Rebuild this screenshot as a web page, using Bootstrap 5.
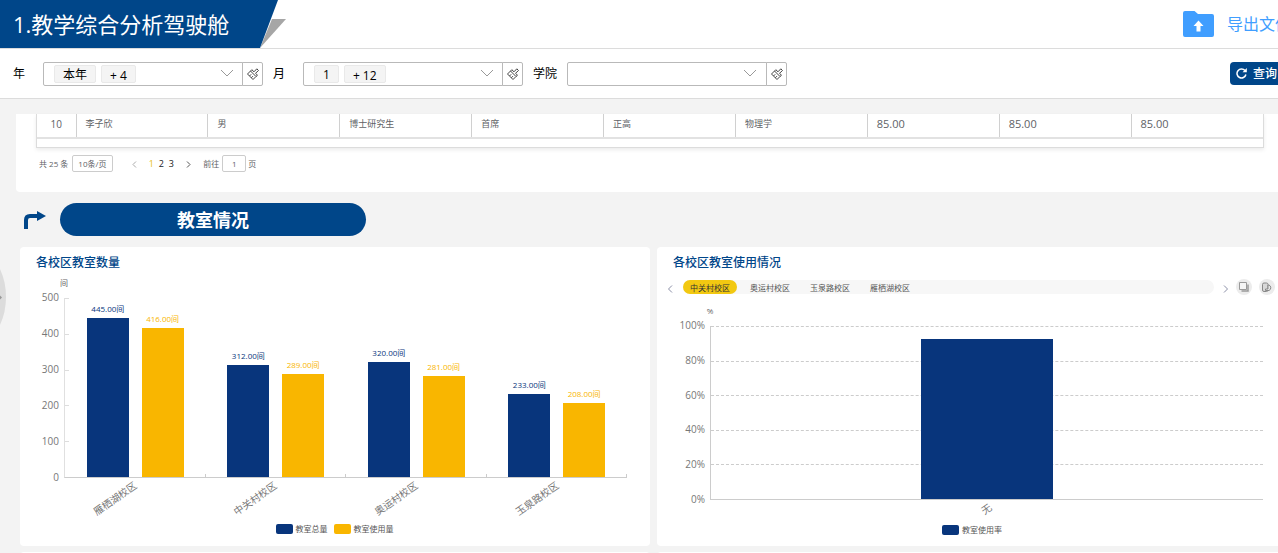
<!DOCTYPE html>
<html lang="zh-CN">
<head>
<meta charset="utf-8">
<meta name="viewport" content="width=device-width, initial-scale=1">
<title>教学综合分析驾驶舱</title>
<link href="https://cdn.jsdelivr.net/npm/bootstrap@5.3.0/dist/css/bootstrap.min.css" rel="stylesheet">
<style>
  :root { --brand: #004689; --bar: #08357c; --accent: #f9b600; --rule: #dcdcdc; }
  body { font-family: "Open Sans", "Noto Sans CJK SC", sans-serif; font-size: 12px; line-height: 16px; color: #000; background: #f3f3f3; overflow: hidden; }
  /* the dashboard is slightly wider than the window and is clipped at its right edge */
  .app { width: calc(100% + 16px); height: 100vh; }
  .topbar { border-bottom: 1px solid var(--rule); }
  .topbar h1 { width: 260px; height: 48px; padding-left: 13px; font-size: 22px; line-height: 48px; background: var(--brand); }
  .export-link { font-size: 16px; line-height: 24px; color: #409eff; gap: 13px; padding-right: 3px; }
  .filters { height: 50px; gap: 10px; padding: 0 9px 0 13px; border-bottom: 1px solid var(--rule); }
  .filter-label { min-width: 20px; }
  .picker { width: 200px; height: 24px; font-size: 12px; border: 1px solid #b9b9b9; border-radius: 2px 0 0 2px; background: #fff; padding: 0 9px 0 10px; gap: 5px; }
  .picker.form-select { background: #fff url("data:image/svg+xml,%3Csvg xmlns='http://www.w3.org/2000/svg' viewBox='0 0 12 7'%3E%3Cpath d='M0 0 6 6 12 0' fill='none' stroke='%23999'/%3E%3C/svg%3E") no-repeat right 10px center / 12px 7px; }
  .chip { height: 18px; padding: 0 8px; line-height: 17px; border: 1px solid #e9e9e9; border-radius: 2px; background: #f4f4f4; }
  .chip-more { line-height: 19px; }
  .clear-btn { width: 21px; height: 24px; margin-left: -1px; border: 1px solid #b9b9b9; border-radius: 0 2px 2px 0; background: #fff; }
  .query-btn { height: 23px; padding: 0 8px 0 6px; font-size: 12px; font-weight: 500; line-height: 23px; color: #fff; background: var(--brand); border-radius: 4px; gap: 6px; }
  .panel { margin: 15px 0 0 16px; padding: 0 30px 20px 20px; background: #fff; border-radius: 0 0 4px 4px; }
  .grid-frame { height: 34px; border: solid var(--rule); border-width: 0 1px 1px; box-shadow: 0 2px 4px rgba(0,0,0,.08); }
  .grid-frame table { table-layout: fixed; font-size: 9px; color: #606266; }
  .grid-frame td { height: 24px; padding: 0 8px 4px 9px; vertical-align: middle; border-right: 1px solid #d0d0d0; border-bottom: 2px solid #e2e2e2; }
  .grid-frame td:last-child { border-right: 0; }
  .grid-frame td:first-child { width: 39px; padding: 0 0 4px; text-align: center; font-size: 10px; }
  .grid-frame td.score { font-size: 11px; }
  .pager { margin: 7px 0 0 3px; font-size: 8px; color: #606266; }
  .pager select, .pager input { height: 17px; border: 1px solid #ccc; border-radius: 2px; background: #fff; color: #606266; font-size: 8px; text-align: center; padding: 0; appearance: none; }
  .pager select { width: 41px; padding-left: 5px; text-align: left; }
  .pager input { width: 24px; margin: 0 2px 0 3px; }
  .pager a { width: 10px; font-size: 9px; color: #222; text-align: center; }
  .pager a.current { color: #e8c020; }
  .pager .prev { margin: 0 7px 0 16px; }
  .pager .next { margin: 0 10px 0 7px; }
  .section-head { margin: 11px 0 0 24px; gap: 14px; }
  .section-head h2 { width: 306px; height: 33px; font-size: 18px; line-height: 34px; border-radius: 17px; background: var(--brand); }
  .cards { margin: 11px 7px 0 20px; gap: 6px 7px; grid-template-columns: 1fr 1fr; }
  .chart-card { border: 0; border-radius: 4px; padding: 8px 0 10px 16px; min-height: 299px; }
  .chart-card h3 { font-size: 12px; line-height: 16px; font-weight: 500; color: var(--brand); }
  .unit { width: 60px; font-size: 8px; line-height: 12px; color: #666; text-align: center; }
  .chart-rooms { padding-right: 23px; }
  .chart-rooms .unit { margin: 6px 0 9px -2px; }
  .chart-usage { padding-right: 24px; }
  .chart-usage .unit { margin: 10px 0 9px 7px; }
  .y-axis { margin: -7px 5px -5px 0; font-size: 10px; line-height: 12px; color: #777; text-align: right; }
  .chart-rooms .y-axis { width: 23px; }
  .chart-usage .y-axis { width: 32px; }
  .plot { border: solid #ccc; border-width: 0 0 1px 1px; }
  .chart-rooms .plot { height: 180px; border-left-color: #e0e0e0; }
  .chart-usage .plot { height: 174px; }
  .scale { inset: 0; }
  .scale i { flex: 1 1 0; border-top: 1px solid #ddd; }
  .chart-rooms .scale i { width: 4px; }
  .chart-usage .scale i { border-top: 1px dashed #ccc; }
  .bar-group { flex: 1 1 0; gap: 9%; }
  .bar-group::after { content: ""; position: absolute; right: 0; bottom: 0; height: 3px; border-right: 1px solid #ccc; }
  .bar-col { width: 30%; font-size: 8px; line-height: 12px; }
  .bar-col b { font-weight: 400; white-space: nowrap; margin-bottom: 3px; color: var(--tone); }
  .bar-col div { width: 100%; background: var(--tone); }
  .chart-usage .bar-col { width: 24%; }
  .chart-usage .bar-group::after { display: none; }
  .tone-total { --tone: var(--bar); }
  .tone-used { --tone: var(--accent); }
  .x-axis { font-size: 10px; line-height: 12px; color: #777; padding-top: 1px; }
  .chart-rooms .x-axis { height: 45px; margin-left: 28px; }
  .chart-usage .x-axis { height: 24px; margin-left: 37px; }
  .x-axis div { flex: 1 1 0; display: flex; justify-content: flex-end; padding-right: 50%; }
  .chart-rooms .x-axis div { padding-right: 13%; }
  .x-axis span { white-space: nowrap; transform: rotate(-35deg); transform-origin: 100% 0; }
  .legend-row { gap: 6px; font-size: 8px; line-height: 12px; color: #555; }
  .legend-row span { display: flex; align-items: center; gap: 3px; }
  .legend-row i { width: 17px; height: 10px; border-radius: 2px; background: var(--tone); }
  .chart-rooms .legend-row { margin: 0 -22px 0 -16px; }
  .chart-usage .legend-row { margin: 0 -24px 0 -16px; }
  .tabs-row { margin: 8px -12px 0 -6px; height: 16px; }
  .tab-strip { height: 14px; gap: 6px; border-radius: 7px; background: #f7f7f7; margin: 0 9px 0 10px; }
  .tab-strip button { padding: 0 7px; border: 0; border-radius: 7px; background: none; font-size: 8px; line-height: 15px; color: #555; }
  .tab-strip button.active { background: #f2c811; color: #333; }
  .arrow-btn, .tool-btn { border: 0; padding: 0; background: none; line-height: 0; }
  .arrow-btn { margin-top: 4px; }
  .tool-btn { width: 16px; height: 16px; margin-left: 7px; border-radius: 50%; background: #ececec; }
  .drawer-handle { left: 0; top: 265px; border: 0; padding: 0; background: none; line-height: 0; }
</style>
</head>
<body>
<svg class="d-none" aria-hidden="true">
  <symbol id="brush" viewBox="0 0 14 14"><g fill="none" stroke="#444" stroke-linejoin="round"><path d="M4.500 4 1.500 7 7 12.500 10 9.500ZM4.500 4 5.800 2.700 8 4.800 10.800 1.800 12.500 3.500 9.500 6.300 11.500 8.200 10 9.500"/><path d="M3.500 9 5.200 7.300M5.300 10.800 7 9.100"/></g></symbol>
  <symbol id="chevron" viewBox="0 0 12 7"><path d="M0 0 6 6 12 0" fill="none" stroke="#999"/></symbol>
</svg>

<div class="app d-flex flex-column">
  <header class="topbar d-flex align-items-center bg-white">
    <h1 class="m-0 fw-normal text-white text-nowrap">1.教学综合分析驾驶舱</h1>
    <svg width="26" height="48" aria-hidden="true"><path d="M12 19H26L0 48Z" fill="#a6a6a6"/><path d="M0 0H18L0 48Z" fill="#004689"/></svg>
    <a href="#" class="export-link ms-auto d-flex align-items-center text-decoration-none text-nowrap">
      <svg width="31" height="26" viewBox="0 0 31 26" aria-hidden="true"><path d="M2 0H11.500L15 3H29a2 2 0 0 1 2 2V24a2 2 0 0 1-2 2H2a2 2 0 0 1-2-2V2A2 2 0 0 1 2 0Z" fill="#409eff"/><path d="M15.500 9.500 20.500 15H17.500V20.500H13.500V15H10.500Z" fill="#fff"/></svg>
      导出文件
    </a>
  </header>

  <form class="filters d-flex align-items-center bg-white flex-shrink-0">
    <label class="filter-label" for="year">年</label>
    <div class="d-flex">
      <button type="button" id="year" class="picker d-flex align-items-center" aria-haspopup="listbox">
        <span class="chip">本年</span><span class="chip chip-more">+ 4</span>
        <svg class="ms-auto" width="12" height="7"><use href="#chevron"/></svg>
      </button>
      <button type="button" class="clear-btn d-flex align-items-center justify-content-center p-0" aria-label="清除年"><svg width="14" height="14"><use href="#brush"/></svg></button>
    </div>
    <label class="filter-label" for="month">月</label>
    <div class="d-flex">
      <button type="button" id="month" class="picker d-flex align-items-center" aria-haspopup="listbox">
        <span class="chip">1</span><span class="chip chip-more">+ 12</span>
        <svg class="ms-auto" width="12" height="7"><use href="#chevron"/></svg>
      </button>
      <button type="button" class="clear-btn d-flex align-items-center justify-content-center p-0" aria-label="清除月"><svg width="14" height="14"><use href="#brush"/></svg></button>
    </div>
    <label class="filter-label" for="college">学院</label>
    <div class="d-flex">
      <select id="college" class="picker form-select"><option></option></select>
      <button type="button" class="clear-btn d-flex align-items-center justify-content-center p-0" aria-label="清除学院"><svg width="14" height="14"><use href="#brush"/></svg></button>
    </div>
    <button type="button" class="query-btn btn ms-auto d-flex align-items-center border-0 text-nowrap">
      <svg width="11" height="11" viewBox="0 0 11 11" aria-hidden="true"><path d="M9 2.600A4.500 4.500 0 1 0 9.900 6.500" fill="none" stroke="#fff" stroke-width="1.500"/><path d="M10.800 0V4.300H6.500Z" fill="#fff"/></svg>查询
    </button>
  </form>

  <main class="flex-grow-1 overflow-hidden">
    <section class="panel">
      <div class="grid-frame">
        <table class="w-100">
          <tbody><tr><td>10</td><td>李子欣</td><td>男</td><td>博士研究生</td><td>首席</td><td>正高</td><td>物理学</td><td class="score">85.00</td><td class="score">85.00</td><td class="score">85.00</td></tr></tbody>
        </table>
      </div>
      <nav class="pager d-flex align-items-center" aria-label="分页">
        <span>共 25 条</span>
        <select class="ms-1" aria-label="每页条数"><option>10条/页</option></select>
        <a href="#" class="prev" aria-label="上一页"><svg width="5" height="7" viewBox="0 0 5 7"><path d="M4 .500 1 3.500 4 6.500" fill="none" stroke="#aaa"/></svg></a>
        <a href="#" class="current text-decoration-none">1</a>
        <a href="#" class="text-decoration-none">2</a>
        <a href="#" class="text-decoration-none">3</a>
        <a href="#" class="next" aria-label="下一页"><svg width="5" height="7" viewBox="0 0 5 7"><path d="M1 .500 4 3.500 1 6.500" fill="none" stroke="#555"/></svg></a>
        <label for="page">前往</label>
        <input id="page" type="text" value="1"><span>页</span>
      </nav>
    </section>

    <div class="section-head d-flex align-items-center">
      <svg width="22" height="18" viewBox="0 0 22 18" aria-hidden="true"><path d="M2 18V9Q2 5 6 5H14" fill="none" stroke="#004689" stroke-width="4"/><path d="M13 0 22 5 13 10Z" fill="#004689"/></svg>
      <h2 class="m-0 fw-bold text-white text-center">教室情况</h2>
    </div>

    <div class="cards d-grid">
      <section class="card chart-card chart-rooms">
        <h3 class="m-0">各校区教室数量</h3>
        <div class="unit">间</div>
        <div class="d-flex">
          <div class="y-axis d-flex flex-column justify-content-between"><span>500</span><span>400</span><span>300</span><span>200</span><span>100</span><span>0</span></div>
          <div class="plot flex-grow-1 d-flex position-relative">
            <div class="scale position-absolute d-flex flex-column"><i></i><i></i><i></i><i></i><i></i></div>
            <div class="bar-group d-flex justify-content-center position-relative">
              <div class="bar-col tone-total d-flex flex-column justify-content-end align-items-center"><b>445.00间</b><div style="height:89%"></div></div>
              <div class="bar-col tone-used d-flex flex-column justify-content-end align-items-center"><b>416.00间</b><div style="height:83.2%"></div></div>
            </div>
            <div class="bar-group d-flex justify-content-center position-relative">
              <div class="bar-col tone-total d-flex flex-column justify-content-end align-items-center"><b>312.00间</b><div style="height:62.4%"></div></div>
              <div class="bar-col tone-used d-flex flex-column justify-content-end align-items-center"><b>289.00间</b><div style="height:57.8%"></div></div>
            </div>
            <div class="bar-group d-flex justify-content-center position-relative">
              <div class="bar-col tone-total d-flex flex-column justify-content-end align-items-center"><b>320.00间</b><div style="height:64%"></div></div>
              <div class="bar-col tone-used d-flex flex-column justify-content-end align-items-center"><b>281.00间</b><div style="height:56.2%"></div></div>
            </div>
            <div class="bar-group d-flex justify-content-center position-relative">
              <div class="bar-col tone-total d-flex flex-column justify-content-end align-items-center"><b>233.00间</b><div style="height:46.6%"></div></div>
              <div class="bar-col tone-used d-flex flex-column justify-content-end align-items-center"><b>208.00间</b><div style="height:41.6%"></div></div>
            </div>
          </div>
        </div>
        <div class="x-axis d-flex"><div><span>雁栖湖校区</span></div><div><span>中关村校区</span></div><div><span>奥运村校区</span></div><div><span>玉泉路校区</span></div></div>
        <div class="legend-row d-flex justify-content-center"><span class="tone-total"><i></i>教室总量</span><span class="tone-used"><i></i>教室使用量</span></div>
      </section>

      <section class="card chart-card chart-usage">
        <h3 class="m-0">各校区教室使用情况</h3>
        <div class="tabs-row d-flex align-items-center">
          <button type="button" class="arrow-btn" aria-label="向左"><svg width="6" height="8" viewBox="0 0 6 8"><path d="M5 .500 1.500 4 5 7.500" fill="none" stroke="#8a8ea6"/></svg></button>
          <div class="tab-strip d-flex flex-grow-1">
            <button type="button" class="active">中关村校区</button><button type="button">奥运村校区</button><button type="button">玉泉路校区</button><button type="button">雁栖湖校区</button>
          </div>
          <button type="button" class="arrow-btn" aria-label="向右"><svg width="6" height="8" viewBox="0 0 6 8"><path d="M1 .500 4.500 4 1 7.500" fill="none" stroke="#8a8ea6"/></svg></button>
          <button type="button" class="tool-btn" aria-label="复制"><svg width="16" height="16" viewBox="0 0 16 16"><path d="M3.500 3.500H10.500V10.500H3.500Z" fill="#f5f5f5" stroke="#999"/><path d="M12 5.500V12H5.500" fill="none" stroke="#999" stroke-width="1.500"/></svg></button>
          <button type="button" class="tool-btn" aria-label="图表类型"><svg width="16" height="16" viewBox="0 0 16 16"><rect x="3.500" y="4" width="5.500" height="8.500" rx="1.500" fill="#d8d8d8" stroke="#888"/><path d="M9 6H10A3 3 0 0 1 10 11.500H6.500V10H9Z" fill="#e8e8e8" stroke="#888"/></svg></button>
        </div>
        <div class="unit">%</div>
        <div class="d-flex">
          <div class="y-axis d-flex flex-column justify-content-between"><span>100%</span><span>80%</span><span>60%</span><span>40%</span><span>20%</span><span>0%</span></div>
          <div class="plot flex-grow-1 d-flex position-relative">
            <div class="scale position-absolute d-flex flex-column"><i></i><i></i><i></i><i></i><i></i></div>
            <div class="bar-group d-flex justify-content-center position-relative">
              <div class="bar-col tone-total d-flex flex-column justify-content-end"><div style="height:92.7%"></div></div>
            </div>
          </div>
        </div>
        <div class="x-axis d-flex"><div><span>无</span></div></div>
        <div class="legend-row d-flex justify-content-center"><span class="tone-total"><i></i>教室使用率</span></div>
      </section>

      <section class="card chart-card"></section>
      <section class="card chart-card"></section>
    </div>
  </main>
</div>

<button type="button" class="drawer-handle position-absolute" aria-label="展开侧栏"><svg width="6" height="64" viewBox="0 0 6 64"><path d="M0 4Q6 17 6 32T0 60Z" fill="#dcdcdc"/><path d="M0 30.500 2 32.500 0 34.500Z" fill="#999"/></svg></button>
<script src="https://cdn.jsdelivr.net/npm/bootstrap@5.3.0/dist/js/bootstrap.bundle.min.js"></script>
</body>
</html>
